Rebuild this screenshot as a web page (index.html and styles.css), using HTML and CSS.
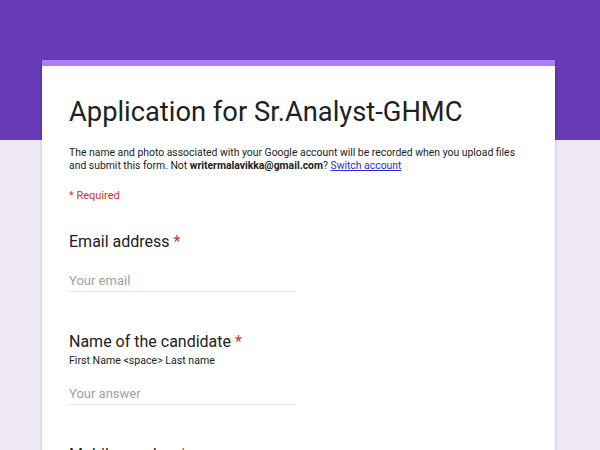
FILE: index.html
```html
<!DOCTYPE html>
<html>
<head>
  <title>Application for Sr.Analyst-GHMC</title>
  <link rel="stylesheet" href="styles.css">
</head>
<body>
  <div class="form-card">
    <div class="form-head">
      <h1>Application for Sr.Analyst-GHMC</h1>
      <p class="account-note">The name and photo associated with your Google account will be recorded when you upload files and submit this form. Not <b>writermalavikka@gmail.com</b>? <a href="#">Switch account</a></p>
      <p class="required-note">* Required</p>
    </div>

    <div class="question">
      <div class="question-title">Email address <span class="star">*</span></div>
      <input type="text" class="answer" placeholder="Your email">
    </div>

    <div class="question">
      <div class="question-title">Name of the candidate <span class="star">*</span></div>
      <div class="question-help">First Name &lt;space&gt; Last name</div>
      <input type="text" class="answer" placeholder="Your answer">
    </div>

    <div class="question">
      <div class="question-title">Mobile number <span class="star">*</span></div>
      <input type="text" class="answer" placeholder="Your answer">
    </div>
  </div>
</body>
</html>
```

FILE: styles.css
```css
body {
  font-family: Roboto, "Liberation Sans", Arial, sans-serif;
  margin: 0;
  padding: 60px 0 40px 42px;
  color: #202124;
  /* purple band on top, lavender below */
  background: linear-gradient(#673ab7 0, #673ab7 140px, #efe9f7 140px);
  min-height: 100vh;
  box-sizing: border-box;
}

.form-card {
  width: 513px;
  background-color: #fff;
  border-top: 6px solid #a97ff5;
  box-shadow: 0 1px 3px rgba(0, 0, 0, 0.25);
  padding: 0 27px;
  box-sizing: border-box;
}

.form-head {
  padding-top: 29px;
}

.form-head h1 {
  font-size: 27.3px;
  font-weight: 400;
  line-height: 34px;
  margin: 0 0 17px;
}

.account-note {
  font-size: 10.4px;
  line-height: 13px;
  margin: 0;
}

.account-note a {
  color: #2b2bd8;
}

.required-note {
  color: #d93025;
  font-size: 11px;
  line-height: 14px;
  margin: 17px 0 0;
}

.question {
  padding-top: 29px;
}

.question + .question {
  padding-top: 40px;
}

.question-title {
  font-size: 16px;
  line-height: 20px;
}

.star {
  color: #d93025;
}

.question-help {
  font-size: 10.6px;
  line-height: 14px;
  margin-top: 2px;
}

.answer {
  display: block;
  width: 226px;
  margin-top: 21px;
  padding: 0 0 2px;
  border: none;
  border-bottom: 1px solid #e3e3e3;
  font-family: inherit;
  font-size: 13px;
  line-height: 16px;
  outline: none;
}

.question-help + .answer {
  margin-top: 18px;
}

.answer::placeholder {
  color: #a0a0a0;
}
```
